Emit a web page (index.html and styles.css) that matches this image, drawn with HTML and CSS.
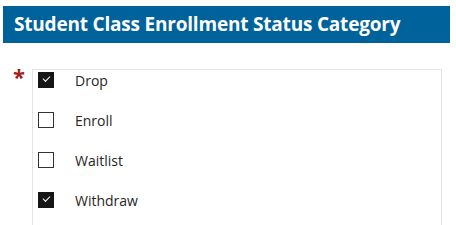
FILE: index.html
```html
<!DOCTYPE html>
<html lang="en">
	<head>
		<meta charset="UTF-8" />
		<title>Enrollment Status</title>
		<link rel="stylesheet" href="styles.css">
	</head>
	<body>
		<h1 class="title">Student Class Enrollment Status Category</h1>
		<div class="field">
			<span class="required">*</span>
			<div class="options">
				<label class="option"><span class="box checked"></span>Drop</label>
				<label class="option"><span class="box"></span>Enroll</label>
				<label class="option"><span class="box"></span>Waitlist</label>
				<label class="option"><span class="box checked"></span>Withdraw</label>
			</div>
		</div>
	</body>
</html>
```

FILE: styles.css
```css
body {
	margin: 6px 6px 0 3px;
	font-family: 'Open Sans', 'Liberation Sans', sans-serif;
	background: #fff;
}
.title {
	margin: 0;
	height: 37px;
	padding: 0 11px;
	background: #00629b;
	color: #fff;
	font-size: 19px;
	font-weight: 700;
	line-height: 37px;
	letter-spacing: -0.2px;
}
.field {
	display: flex;
	margin-top: 26px;
}
.required {
	width: 29px;
	padding-left: 10px;
	box-sizing: border-box;
	color: #a51d1d;
	font-size: 22px;
	font-weight: 700;
	line-height: 20px;
	margin-top: -3px;
}
.options {
	flex: 1;
	margin-right: 8px;
	border: 1px solid #e4e4e4;
	border-bottom: none;
	padding: 2px 0 0 5px;
	height: 160px;
}
.option {
	display: flex;
	align-items: center;
	height: 16px;
	margin-bottom: 24px;
	font-size: 14px;
	color: #262626;
}
.box {
	width: 14px;
	height: 14px;
	border: 1px solid #333;
	margin-right: 21px;
	position: relative;
}
.box.checked {
	background: #161616;
	border-color: #161616;
}
.box.checked::after {
	content: '';
	position: absolute;
	left: 4px;
	top: 3px;
	width: 6px;
	height: 3px;
	border-left: 1.5px solid #fff;
	border-bottom: 1.5px solid #fff;
	transform: rotate(-45deg);
}
```
